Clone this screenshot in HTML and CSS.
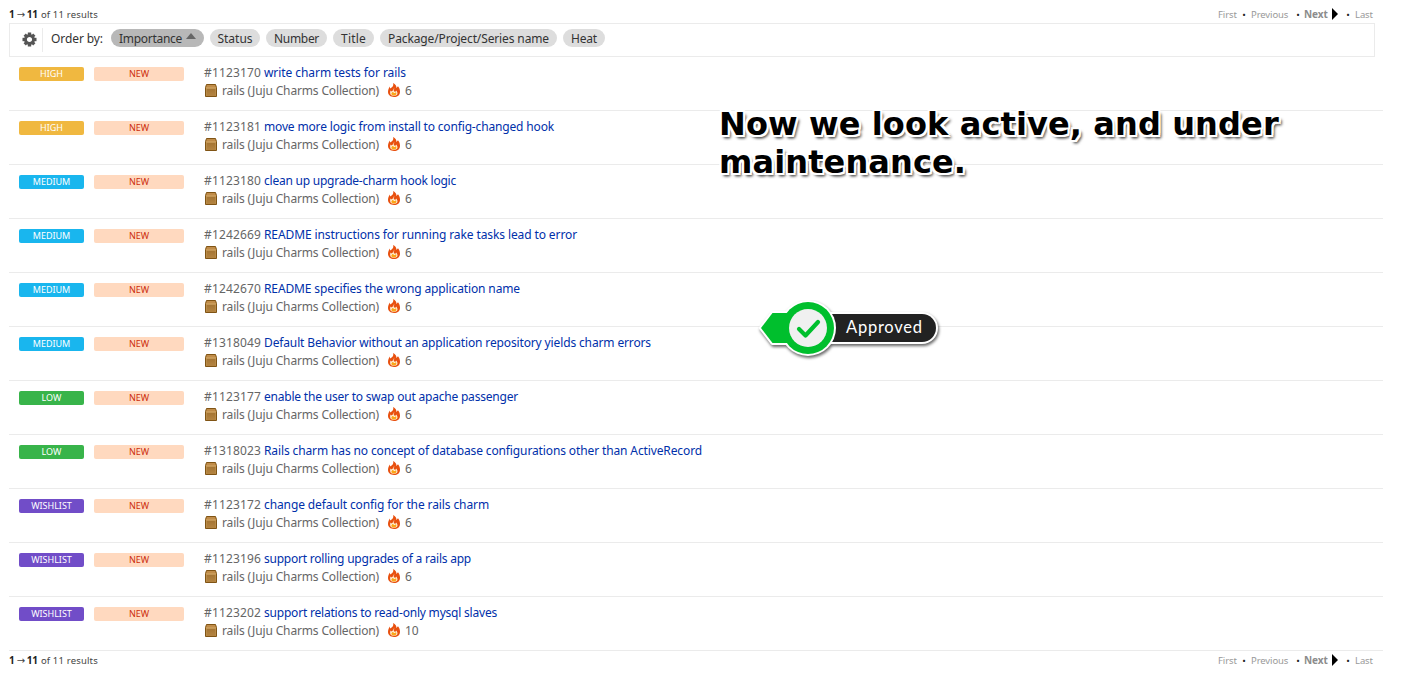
FILE: index.html
```html
<!DOCTYPE html>
<html lang="en">
<head>
<meta charset="utf-8">
<title>Bugs</title>
<link rel="stylesheet" href="styles.css">
</head>
<body>
<svg width="0" height="0" class="defs">
  <defs>
    <linearGradient id="wood" x1="0" y1="0" x2="0" y2="1"><stop offset="0" stop-color="#9c6c2b"/><stop offset="1" stop-color="#b58542"/></linearGradient>
    <symbol id="box" viewBox="0 0 12 13">
      <path d="M1.500.5h9l1 3v9H.5v-9z" fill="url(#wood)" stroke="#805414"/>
      <path d="M2 1h8l.8 2.500H1.200z" fill="#c08c49"/>
      <path d="M1 4h10" stroke="#e2b877"/>
      <path d="M1.500 5v7M10.500 5v7" stroke="#b78a48"/>
    </symbol>
    <symbol id="fire" viewBox="0 0 12 14">
      <path d="M5 0c2.500 1 3.800 3 3.300 5L10 3.200c1.300 1.500 2 3.500 2 5.500 0 3.300-2.500 5.300-6 5.300s-6-2-6-5.200c0-2.300 1-4 2-5.300v2C4.500 4.500 6 2.500 5 0z" fill="#e8500f"/>
      <path d="M6 4.500c.5 1.500-.2 2.500-.3 3.500l1.500 1 1-1.500c1 1.500 1.700 2.500 1 4-1 1.700-5 1.800-6.500.2C1.800 10 2.300 8.500 2.500 7.500l1 1C5 7.500 6 6.500 6 4.500z" fill="#fff3dc"/>
      <path d="M5 8.500c.2 1 1.200 1.500 2 1.500l1-1c1 1.800.2 3.500-2 3.500S3 11.500 3.500 10z" fill="#fba619"/>
    </symbol>
  </defs>
</svg>
<main class="page">
  <div class="batch">
    <div class="count"><b>1</b> <i class="arrow">→</i> <b>11</b> <span data-width="57">of 11 results</span></div>
    <nav class="pager"><span class="first">First</span><em>•</em><span class="prev">Previous</span><em class="mid">•</em><b>Next</b><i class="tri"></i><em class="late">•</em><span class="last">Last</span></nav>
  </div>
  <div class="orderbar">
    <div class="gear"><svg width="15" height="15" viewBox="-7.500 -7.500 15 15"><g fill="#555"><rect x="-1.700" y="-7" width="3.400" height="14"/><rect x="-1.600" y="-6.800" width="3.200" height="13.600" transform="rotate(45)"/><rect x="-1.700" y="-7" width="3.400" height="14" transform="rotate(90)"/><rect x="-1.600" y="-6.800" width="3.200" height="13.600" transform="rotate(135)"/></g><circle r="4" fill="#fff" stroke="#555" stroke-width="2.800"/></svg></div>
    <span class="label"><span data-width="52">Order by:</span></span>
    <div class="pills"><span class="pill on"><span data-width="63">Importance</span><i></i></span><span class="pill w50"><span data-width="35">Status</span></span><span class="pill w61"><span data-width="45">Number</span></span><span class="pill w41"><span data-width="25">Title</span></span><span class="pill w177"><span data-width="161">Package/Project/Series name</span></span><span class="pill w42"><span data-width="26">Heat</span></span></div>
  </div>
  <div class="rows" id="rows"></div>
  <div class="batch">
    <div class="count"><b>1</b> <i class="arrow">→</i> <b>11</b> <span data-width="57">of 11 results</span></div>
    <nav class="pager"><span class="first">First</span><em>•</em><span class="prev">Previous</span><em class="mid">•</em><b>Next</b><i class="tri"></i><em class="late">•</em><span class="last">Last</span></nav>
  </div>
</main>
<div class="note">Now we look active, and under<br>maintenance.</div>
<div class="stamp">
  <svg width="190" height="66" viewBox="0 0 190 66">
    <g class="cast">
      <rect x="46" y="14" width="134" height="28" rx="14" fill="#222" stroke="#fff" stroke-width="4" paint-order="stroke"/>
      <path d="M5 28 16.500 13H40V43H16.500z" fill="#fff" stroke="#fff" stroke-width="4" stroke-linejoin="round"/>
      <circle cx="52" cy="28" r="28" fill="#fff"/>
      <path d="M5 28 16.500 13H40V43H16.500z" fill="#00bf2d"/>
      <circle cx="52" cy="28" r="26" fill="#00bf2d"/>
      <circle cx="52" cy="28" r="19" fill="#f0f0f0"/>
      <path d="M43 29 49.500 35.500 62 22" fill="none" stroke="#00bf2d" stroke-width="4.200" stroke-linecap="round" stroke-linejoin="round"/>
    </g>
  </svg>
  <span>Approved</span>
</div>
<script src="bugs.js"></script>
</body>
</html>
```
FILE: styles.css
```css
body { margin: 0; background: #fff; color: #333; font: 12px/18px "Noto Sans", sans-serif; position: relative; height: 680px; overflow: hidden; }
.defs { position: absolute; }
.page { padding: 5px 20px 0 9px; }
.batch { display: flex; justify-content: space-between; height: 18px; padding-right: 10px; font-size: 9.500px; line-height: 19px; letter-spacing: -0.1px; }
.count { display: flex; color: #444; white-space: pre; }
.count b { color: #222; font-size: 10px; }
.count span { margin-left: 3px; }
.arrow { font: 10px/19px "DejaVu Sans", sans-serif; width: 9px; margin: 0 1px 0 2px; }
.pager { display: flex; color: #999; }
.pager em { font-style: normal; color: #222; width: 14px; text-align: center; }
.pager b { color: #8c8c8c; width: 25px; font-size: 10px; }
.tri { width: 0; height: 0; border: solid transparent; border-width: 6px 0 6px 6px; border-left-color: #000; margin: 3px 3px 0 3px; }
.first { width: 19px; } .prev { width: 41px; } .last { width: 18px; }
.pager .mid { width: 12px; }
.orderbar { display: flex; box-sizing: border-box; width: 1366px; height: 34px; border: 1px solid #ebebeb; }
.gear { box-sizing: border-box; width: 33px; height: 24px; margin-top: 4px; padding: 4px 0 0 12px; border-right: 1px solid #ebebeb; }
.gear svg { display: block; }
.label { margin: 6px 0 0 8px; width: 60px; white-space: nowrap; }
.pills { display: flex; gap: 6px; margin-top: 5px; }
.pill { box-sizing: border-box; height: 18px; border-radius: 9px; background: #ddd; white-space: nowrap; display: flex; justify-content: center; line-height: 20px; }
.pill.on { width: 93px; background: #b8b8b8; gap: 4px; }
.pill.on i { border: 5px solid transparent; border-top: 0; border-bottom: 6px solid #666; height: 0; margin-top: 4px; }
.w50 { width: 50px; } .w61 { width: 61px; } .w41 { width: 41px; } .w177 { width: 177px; } .w42 { width: 42px; }
.row { display: flex; box-sizing: border-box; height: 54px; padding: 7px 0 0 10px; border-bottom: 1px solid #ebebeb; }
.tag { height: 14px; margin: 3px 10px 0 0; border-radius: 2px; font-size: 9px; line-height: 14px; text-align: center; color: #fff; }
.imp { width: 65px; } .status { width: 90px; background: #ffd9bf; color: #cc2d0d; margin-right: 20px; }
.high { background: #f0b840; } .medium { background: #19b6ee; } .low { background: #38b44a; } .wishlist { background: #714dc8; }
.line { display: flex; height: 18px; white-space: pre; color: #666; }
.num { width: 60px; }
.title { color: #0030aa; }
.pkg { width: 166px; }
.meta svg { display: block; }
.meta .bx { width: 12px; height: 13px; margin: 2px 5px 0 1px; }
.meta .fr { width: 12px; height: 14px; margin: 1px 5px 0 0; }
.note { position: absolute; left: 719px; top: 105px; font: bold 32px/38px "DejaVu Sans", sans-serif; letter-spacing: .12px; color: #000; white-space: nowrap; text-shadow: -2px 0 #fff, 2px 0 #fff, 0 -2px #fff, 0 2px #fff, -2px -2px #fff, 2px -2px #fff, -2px 2px #fff, 2px 2px #fff, 2px 3px 3px #555, 3px 3px 3px #777; }
.stamp { position: absolute; left: 756px; top: 300px; }
.stamp svg { display: block; }
.cast { filter: drop-shadow(1px 2px 1.500px rgba(0,0,0,.6)); }
.stamp span { position: absolute; left: 90px; top: 15px; font: 16.500px/24px Lato, sans-serif; letter-spacing: .75px; color: #fff; }
```
FILE: bugs.js
```js
const bugs = [
  ['HIGH', 1123170, 'write charm tests for rails', 6, 142],
  ['HIGH', 1123181, 'move more logic from install to config-changed hook', 6, 290],
  ['MEDIUM', 1123180, 'clean up upgrade-charm hook logic', 6, 192],
  ['MEDIUM', 1242669, 'README instructions for running rake tasks lead to error', 6, 313],
  ['MEDIUM', 1242670, 'README specifies the wrong application name', 6, 256],
  ['MEDIUM', 1318049, 'Default Behavior without an application repository yields charm errors', 6, 387],
  ['LOW', 1123177, 'enable the user to swap out apache passenger', 6, 254],
  ['LOW', 1318023, 'Rails charm has no concept of database configurations other than ActiveRecord', 6, 438],
  ['WISHLIST', 1123172, 'change default config for the rails charm', 6, 225],
  ['WISHLIST', 1123196, 'support rolling upgrades of a rails app', 6, 207],
  ['WISHLIST', 1123202, 'support relations to read-only mysql slaves', 10, 233],
];

document.getElementById('rows').innerHTML = bugs.map(([imp, id, title, heat, width]) => `
<div class="row"><span class="tag imp ${imp.toLowerCase()}">${imp}</span><span class="tag status">NEW</span><div>
<div class="line"><span class="num" data-width="57">#${id}</span><span class="title" data-width="${width}">${title}</span></div>
<div class="line meta"><svg class="bx"><use href="#box"/></svg><span class="pkg"><span data-width="157">rails (Juju Charms Collection)</span></span><svg class="fr"><use href="#fire"/></svg><span>${heat}</span></div>
</div></div>`).join('');

document.querySelectorAll('[data-width]').forEach((el) => {
  el.style.letterSpacing = '0px';
  const range = document.createRange();
  range.selectNodeContents(el);
  const natural = range.getBoundingClientRect().width;
  el.style.letterSpacing = (el.dataset.width - natural) / el.textContent.length + 'px';
});
```
